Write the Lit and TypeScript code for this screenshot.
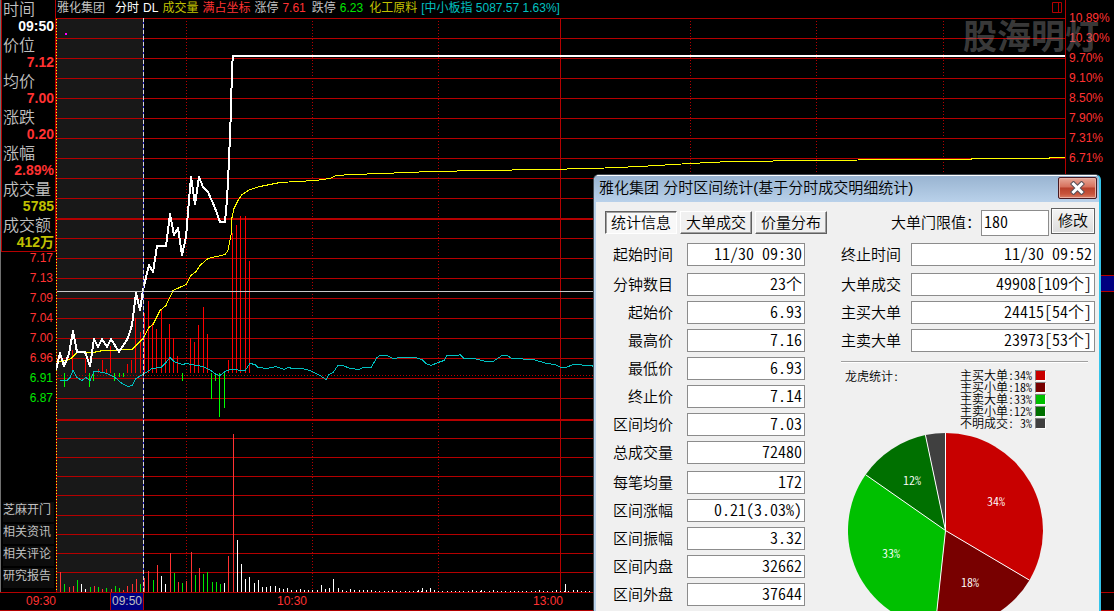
import { LitElement, html, svg, css } from "lit";
import { customElement, property } from "lit/decorators.js";

type Point = [number, number];
type Row = [string, string];

const points = (list: Point[]) => list.map((p) => p.join(",")).join(" ");

const PRICE: Point[] = [
  [56, 370], [60, 353], [64, 366], [69, 354], [73, 331], [77, 352], [85, 352], [90, 366], [94, 339],
  [98, 347], [102, 339], [107, 347], [111, 339], [119, 352], [128, 338], [132, 325], [136, 293],
  [140, 310], [143, 290], [149, 265], [153, 272], [157, 246], [166, 246], [170, 214], [174, 235],
  [178, 228], [182, 255], [186, 237], [189, 200], [191, 177], [195, 204], [199, 177], [203, 187],
  [208, 192], [215, 208], [220, 222], [225, 222], [227, 200], [229, 160], [231, 110], [232, 67],
  [233, 56], [1065, 56],
];

const AVERAGE: Point[] = [
  [57, 361], [67, 360], [71, 358], [77, 352], [93, 352], [103, 350], [132, 349], [143, 338],
  [149, 327], [153, 324], [160, 310], [166, 305], [173, 290], [186, 284], [191, 275], [196, 271],
  [200, 265], [208, 258], [225, 254], [228, 250], [231, 235], [232, 217], [234, 208], [238, 200],
  [242, 194], [250, 189], [260, 186], [280, 182], [315, 180], [330, 178], [336, 175], [353, 174],
  [382, 173], [432, 171], [483, 170], [542, 169], [593, 168], [640, 166], [690, 163], [730, 161],
  [816, 160], [900, 159], [971, 159], [972, 158], [1049, 158], [1050, 157], [1065, 157],
];

const INDEX: Point[] = [
  [60, 380], [67, 380], [70, 377], [73, 370], [77, 377], [82, 380], [86, 377], [90, 380], [94, 371],
  [98, 371], [107, 373], [115, 377], [122, 383], [128, 386], [132, 385], [136, 378], [143, 374],
  [152, 368], [161, 367], [166, 362], [170, 357], [174, 361], [182, 364], [187, 363], [196, 365],
  [203, 366], [211, 370], [216, 374], [220, 375], [225, 371], [230, 369], [245, 370], [250, 363],
  [255, 364], [258, 367], [267, 368], [276, 366], [284, 369], [288, 367], [293, 368], [300, 368],
  [307, 369], [312, 371], [320, 375], [326, 379], [329, 374], [333, 372], [338, 365], [343, 365],
  [350, 368], [359, 369], [363, 367], [371, 367], [377, 357], [380, 355], [387, 355], [393, 358],
  [402, 357], [415, 357], [422, 359], [426, 363], [431, 365], [438, 362], [444, 360], [447, 355],
  [458, 355], [460, 354], [464, 358], [474, 358], [486, 361], [493, 361], [502, 355], [507, 355],
  [512, 358], [533, 359], [547, 363], [555, 364], [561, 367], [566, 367], [573, 364], [590, 365],
  [600, 367], [1065, 370],
];

const RISE: Point[] = [
  [72, 350], [85, 359], [98, 369], [102, 360], [106, 369], [110, 346], [127, 364], [131, 360],
  [135, 318], [140, 332], [144, 313], [148, 301], [152, 323], [156, 329], [161, 310], [165, 338],
  [169, 324], [173, 338], [177, 356], [190, 338], [194, 342], [198, 325], [203, 307], [207, 334],
  [228, 360], [232, 233], [236, 225], [240, 216], [245, 216], [249, 261],
];

const FALL: Point[] = [
  [64, 387], [89, 387], [93, 381], [114, 381], [119, 377], [123, 377], [182, 381], [211, 399],
  [215, 381], [219, 417], [224, 408],
];

const VOLUME: Record<string, Point[]> = {
  "#ff3232": [
    [60, 572], [69, 587], [73, 586], [94, 586], [102, 589], [111, 589], [123, 590], [127, 586],
    [132, 584], [136, 579], [144, 578], [148, 571], [157, 565], [170, 553], [178, 582], [186, 581],
    [191, 552], [199, 568], [228, 556], [233, 434],
  ],
  "#00e600": [
    [64, 584], [77, 580], [90, 587], [98, 587], [106, 588], [115, 586], [119, 588], [140, 584],
    [153, 580], [174, 573], [182, 583], [195, 575], [203, 574], [207, 572], [212, 582], [216, 582],
    [220, 584],
  ],
  "#ffffff": [
    [81, 584], [85, 589], [161, 576], [165, 584], [224, 583], [237, 540], [241, 564], [245, 579],
    [249, 577], [254, 583], [258, 580], [262, 587], [266, 587], [270, 586], [275, 586], [279, 588],
    [283, 589], [287, 588], [291, 590], [296, 590], [300, 589], [304, 590], [308, 590], [312, 590],
    [317, 590], [321, 585], [325, 589], [329, 588], [333, 579], [338, 588], [342, 590], [346, 591],
    [350, 589], [354, 590], [359, 590], [363, 590], [367, 590], [371, 590], [392, 590], [418, 590],
    [422, 588], [426, 590], [430, 588], [434, 590], [472, 590], [481, 590], [493, 590], [539, 590],
    [556, 590], [565, 584], [573, 590], [577, 590],
  ],
};

for (let i = 76; i < 128; i++) VOLUME["#ffffff"].push([Math.round(56 + i * 4.2), 591]);

const GRID_Y = [
  38, 58, 78, 98, 118, 138, 158, 178, 198, 238, 258, 278, 298, 318, 338, 358, 378, 398, 438, 457,
  476, 495, 515, 534, 553, 572,
];

@customElement("minute-chart")
class MinuteChart extends LitElement {
  static styles = css`
    :host { display: block; min-height: 0; }
    svg { display: block; width: 100%; height: 100%; }
  `;

  render() {
    return html`<svg viewBox="56 18 1009 574" preserveAspectRatio="none" aria-label="分时走势">
      <rect x="57" y="19" width="86" height="573" fill="#181818" />
      <g fill="#b40000">
        <rect x="56" y="18" width="1009" height="1" />
        ${GRID_Y.map((y) => svg`<rect x="56" y=${y} width="1009" height="1" />`)}
        <rect x="56" y="218" width="1009" height="2" />
        <rect x="56" y="419" width="1009" height="2" />
        <rect x="560" y="18" width="1" height="574" />
        <rect x="56" y="18" width="1" height="574" />
      </g>
      <g stroke="#b40000" stroke-dasharray="1 2" shape-rendering="crispEdges">
        ${[186, 312, 438, 690, 816, 943].map(
          (x) => svg`<line x1=${x + 0.5} x2=${x + 0.5} y1="21" y2="592" />`
        )}
        <line x1="58" x2="1065" y1="375.5" y2="375.5" />
      </g>
      <line x1="56.5" x2="56.5" y1="19" y2="592" stroke="#ffff00" stroke-dasharray="1 2"
        shape-rendering="crispEdges" />
      <g fill="#ff0000">
        ${RISE.map(([x, y]) => svg`<rect x=${x} y=${y} width="1" height=${373 - y} />`)}
      </g>
      <g fill="#00ff00">
        ${FALL.map(([x, y]) => svg`<rect x=${x} y="373" width="1" height=${y - 373} />`)}
      </g>
      ${Object.entries(VOLUME).map(
        ([color, bars]) => svg`<g fill=${color}>
          ${bars.map(([x, y]) => svg`<rect x=${x} y=${y} width="1" height=${592 - y} />`)}
        </g>`
      )}
      <g fill="none" shape-rendering="crispEdges" stroke-linejoin="round">
        <polyline points=${points(INDEX)} stroke="#00c0c0" transform="translate(0 .5)" />
        <polyline points=${points(AVERAGE)} stroke="#ffff00" transform="translate(0 .5)" />
        <polyline points=${points(PRICE)} stroke="#ffffff" stroke-width="2" />
      </g>
      <rect x="57" y="291" width="1008" height="1" fill="#c8c8c8" />
      <rect x="143" y="18" width="1" height="574" fill="#2020c0" />
      <line x1="143.5" x2="143.5" y1="18" y2="592" stroke="#d8d8d8" stroke-dasharray="4 2"
        shape-rendering="crispEdges" />
      <rect x="65" y="33" width="2" height="2" fill="#ff00ff" />
    </svg>`;
  }
}

const SLICES = [
  { name: "主买大单", share: "34%", color: "#c80000", end: 0.335, x: 148, y: 69 },
  { name: "主买小单", share: "18%", color: "#780000", end: 0.517, x: 122, y: 150 },
  { name: "主卖大单", share: "33%", color: "#00c000", end: 0.847, x: 43, y: 121 },
  { name: "主卖小单", share: "12%", color: "#007000", end: 0.967, x: 64, y: 48 },
  { name: "不明成交", share: " 3%", color: "#404040", end: 1, x: 0, y: 0 },
];

const FIRST_GROUPS: Row[][] = [
  [["起始时间", "11/30 09:30"]],
  [
    ["分钟数目", "23个"],
    ["起始价", "6.93"],
    ["最高价", "7.16"],
    ["最低价", "6.93"],
    ["终止价", "7.14"],
    ["区间均价", "7.03"],
    ["总成交量", "72480"],
  ],
  [
    ["每笔均量", "172"],
    ["区间涨幅", "0.21(3.03%)"],
    ["区间振幅", "3.32"],
    ["区间内盘", "32662"],
    ["区间外盘", "37644"],
  ],
];

const SECOND_GROUPS: Row[][] = [
  [["终止时间", "11/30 09:52"]],
  [
    ["大单成交", "49908[109个]"],
    ["主买大单", "24415[54个]"],
    ["主卖大单", "23973[53个]"],
  ],
];

@customElement("field-list")
class FieldList extends LitElement {
  @property({ attribute: false }) groups: Row[][] = [];

  static styles = css`
    :host { display: flex; flex-direction: column; gap: 7px; }
    .group { display: flex; flex-direction: column; gap: 5px; }
    .row { display: flex; align-items: center; justify-content: space-between; height: 23px; }
    label { flex: 1; padding-bottom: 2px; font-size: 15px; line-height: 20px; white-space: nowrap; text-align: var(--label-align, left); }
    input {
      box-sizing: border-box; width: var(--field-width, 118px); height: 23px; margin: 0 0 0 var(--label-gap, 14px);
      padding: 0 2px 3px; border: 1px solid #8c8c8c; border-radius: 0; background: #fff; color: #000;
      font: 350 16px/18px "Noto Sans CJK SC", sans-serif; font-feature-settings: "hwid"; text-align: right;
    }
  `;

  render() {
    return this.groups.map(
      (group, g) => html`<div class="group">
        ${group.map(
          ([name, value], i) => html`<div class="row">
            <label for=${`f${g}-${i}`}>${name}</label>
            <input id=${`f${g}-${i}`} readonly .value=${value} />
          </div>`
        )}
      </div>`
    );
  }
}

@customElement("stats-dialog")
class StatsDialog extends LitElement {
  static styles = css`
    :host {
      display: block; box-sizing: border-box; color: #000;
      border: 1px solid #404850; border-bottom: 0; border-right: 2px solid #35c4ea;
      border-radius: 6px 6px 0 0; overflow: hidden; background: #f0f0f0;
      font: 350 15px/20px "Noto Sans CJK SC", sans-serif;
    }
    header {
      display: flex; align-items: flex-start; justify-content: space-between; height: 27px;
      box-sizing: border-box; padding: 1px 2px 0 5px; border-top: 1px solid #fff;
      background: linear-gradient(#99b4d1, #b9d1ea);
    }
    h1 { margin: 0; font: 350 15px/22px "Liberation Sans", "Noto Sans CJK SC", sans-serif; white-space: nowrap; }
    .close {
      display: flex; align-items: center; justify-content: center; box-sizing: border-box;
      width: 39px; height: 22px; padding: 0; border: 1px solid #471a22; border-radius: 2px;
      background: linear-gradient(#e8a898, #d6705c 45%, #b8402c 50%, #c8543c 80%, #d88068);
      box-shadow: inset 0 0 0 1px #e8b0a4;
    }
    .close svg { flex: none; }
    .body { border-left: 2px solid #b9d1ea; padding: 6px 4px 0 9px; }
    .top { display: flex; align-items: center; height: 28px; }
    .tabs { display: flex; gap: 3px; }
    .tab {
      width: 72px; height: 23px; padding: 0; white-space: nowrap; box-sizing: border-box;
      border: 1px solid; border-color: #fff #606060 #606060 #fff; box-shadow: inset -1px -1px #a0a0a0;
      background: #f0f0f0; color: #000; font: inherit; line-height: 20px;
    }
    .on { border-color: #606060 #fff #fff #606060; box-shadow: inset 1px 1px #a0a0a0; background: #f8f8f8; }
    .limit { display: flex; margin-left: auto; align-items: center; height: 28px; }
    .limit input {
      align-self: flex-end; box-sizing: border-box; width: 68px; height: 26px; margin: 0 2px 0 0; padding: 0 2px 5px;
      border: 1px solid #8c8c8c; background: #fff; color: #000; font: inherit; font-size: 16px; font-feature-settings: "hwid";
    }
    .limit button {
      align-self: flex-start; box-sizing: border-box; width: 44px; height: 26px; padding: 0 0 2px;
      border: 1px solid #606060; background: linear-gradient(#f4f4f4, #dcdcdc); color: #000; font: inherit;
      box-shadow: inset 0 0 0 1px #fcfcfc;
    }
    .columns { display: flex; justify-content: space-between; align-items: flex-start; margin-top: 7px; }
    .first { width: 200px; --label-align: right; }
    .second { width: 254px; --field-width: 184px; --label-gap: 10px; }
    hr { width: 247px; height: 1px; margin: 9px 0 6px; border: 0; border-top: 1px solid #a0a0a0; background: #fff; }
    .dragon { display: flex; justify-content: space-between; padding: 0 49px 0 4px; font-size: 12px; line-height: 14px; font-feature-settings: "hwid"; }
    ul { margin: 0; padding: 0; list-style: none; }
    li { display: flex; align-items: center; gap: 3px; height: 12px; line-height: 12px; white-space: pre; }
    .swatch { box-sizing: border-box; width: 11px; height: 11px; border: 1px solid; border-color: #808080 #fff #fff #808080; }
    .pie { display: block; width: 195px; height: 195px; margin: 4px 0 0 7px; }
    .pie text { font-size: 12px; font-feature-settings: "hwid"; fill: #fff; text-anchor: middle; }
  `;

  private slice(from: number, to: number, color: string) {
    const at = (t: number) => {
      const a = t * Math.PI * 2;
      return `${97.5 + 97.5 * Math.sin(a)} ${97.5 - 97.5 * Math.cos(a)}`;
    };
    return svg`<path d=${`M97.5 97.5L${at(from)}A97.5 97.5 0 0 1 ${at(to)}Z`} fill=${color} />
      <path d=${`M97.5 97.5L${at(from)}`} stroke="#fff" />`;
  }

  render() {
    return html`
      <header>
        <h1>雅化集团 分时区间统计(基于分时成交明细统计)</h1>
        <button class="close" aria-label="关闭">
          <svg width="15" height="14" viewBox="0 0 15 14" fill="none">
            <path d="M3.5 3l8 8M11.5 3l-8 8" stroke="#5a5058" stroke-width="5" stroke-linecap="square" />
            <path d="M3.5 3l8 8M11.5 3l-8 8" stroke="#fff" stroke-width="3" stroke-linecap="square" />
          </svg>
        </button>
      </header>
      <div class="body">
        <div class="top">
          <div class="tabs">
            <button class="tab on">统计信息</button>
            <button class="tab">大单成交</button>
            <button class="tab">价量分布</button>
          </div>
          <div class="limit">
            <label for="limit">大单门限值：</label>
            <input id="limit" value="180" />
            <button>修改</button>
          </div>
        </div>
        <div class="columns">
          <field-list class="first" .groups=${FIRST_GROUPS}></field-list>
          <div>
            <field-list class="second" .groups=${SECOND_GROUPS}></field-list>
            <hr />
            <div class="dragon">
              <span>龙虎统计:</span>
              <ul>
                ${SLICES.map(
                  (s) => html`<li><span>${s.name}:${s.share}</span><span class="swatch" style="background:${s.color}"></span></li>`
                )}
              </ul>
            </div>
            <svg class="pie" viewBox="0 0 195 195">
              ${SLICES.map((s, i) => this.slice(i ? SLICES[i - 1].end : 0, s.end, s.color))}
              <path d="M97.5 97.5V0" stroke="#fff" />
              ${SLICES.filter((s) => s.x).map(
                (s) => svg`<text x=${s.x} y=${s.y + 4}>${s.share}</text>`
              )}
            </svg>
          </div>
        </div>
      </div>
    `;
  }
}

const READOUT: [string, string, string][] = [
  ["时间", "09:50", "white"],
  ["价位", "7.12", "red"],
  ["均价", "7.00", "red"],
  ["涨跌", "0.20", "red"],
  ["涨幅", "2.89%", "red"],
  ["成交量", "5785", "yellow"],
  ["成交额", "412万", "yellow"],
];

@customElement("app-root")
class AppRoot extends LitElement {
  static styles = css`
    :host {
      position: relative; display: grid; box-sizing: border-box; height: 100vh; overflow: hidden;
      grid-template-columns: 56px minmax(0, 1fr) 49px; grid-template-rows: 18px minmax(0, 1fr) 19px;
      background: #000; color: #c0c0c0;
      font: 12px/16px "Liberation Sans", "Noto Sans CJK SC", sans-serif;
    }
    .side { grid-row: 1 / 3; display: flex; flex-direction: column; border-left: 1px solid #707070; }
    dl { box-sizing: border-box; height: 252px; margin: 0; border: 1px solid #b40000; border-top: 0; }
    dt { height: 18px; padding-left: 1px; font: 350 16px/16px "Noto Sans CJK SC", sans-serif; }
    dd { height: 18px; margin: 0; padding-right: 1px; font-size: 14px; line-height: 17px; font-weight: 700; text-align: right; }
    .white { color: #fff; }
    .red { color: #ff3232; }
    .yellow { color: #c0c000; }
    .green { color: #00e600; }
    .cyan { color: #00c0c0; }
    .scale { margin: -4px 0 0; padding: 0 3px 0 0; list-style: none; text-align: right; line-height: 20px; }
    nav { display: flex; flex-direction: column; gap: 2px; margin-top: auto; padding: 0 2px 4px; }
    nav a { height: 20px; background: #0c0c0c; color: #c0c0c0; line-height: 17px; text-decoration: none; white-space: nowrap; }
    .head { display: flex; gap: 4px; padding: 0 3px 0 1px; line-height: 17px; white-space: nowrap; }
    .stock { margin-right: 6px; }
    .bound { margin-right: 2px; }
    .head svg { margin: 2px 0 0 auto; }
    .percent { grid-column: 3; grid-row: 1 / 3; box-sizing: border-box; padding-top: 8px; border-left: 1px solid #b40000; }
    .percent ul { margin: 0; padding: 0 0 0 3px; list-style: none; line-height: 20px; }
    .cursor { height: 15px; margin-top: 107px; border: 1px solid #b40000; border-right: 0; background: #000080; }
    .times {
      grid-column: 1 / 4; display: grid; grid-template-columns: 56px 54px 34px 133fr 256fr 532fr 49px;
      border: solid #b40000; border-width: 1px 0; line-height: 17px;
    }
    .times span:first-child { text-align: right; }
    .now { border: solid #b40000; border-width: 0 1px; background: #000080; color: #c0c0c0; text-align: center; }
    .t1 { grid-column: 5; }
    .t2 { grid-column: 6; }
    .mark { position: absolute; top: 12px; right: 15px; color: rgba(150, 150, 150, 0.4); font: 700 34px/46px "Noto Sans CJK SC", sans-serif; }
    stats-dialog { position: absolute; top: 174px; right: 13px; width: 508px; }
  `;

  render() {
    return html`
      <div class="side">
        <dl>
          ${READOUT.map(([name, value, tone]) => html`<dt>${name}</dt><dd class=${tone}>${value}</dd>`)}
        </dl>
        <ul class="scale">
          ${["7.17", "7.13", "7.09", "7.04", "7.00", "6.96"].map((v) => html`<li class="red">${v}</li>`)}
          ${["6.91", "6.87"].map((v) => html`<li class="green">${v}</li>`)}
        </ul>
        <nav>
          ${["芝麻开门", "相关资讯", "相关评论", "研究报告"].map((t) => html`<a href="#">${t}</a>`)}
        </nav>
      </div>
      <div class="head">
        <span class="stock">雅化集团</span>
        <span class="white">分时</span>
        <span class="white">DL</span>
        <span class="yellow">成交量</span>
        <span class="red">满占坐标</span>
        <span>涨停</span>
        <span class="red bound">7.61</span>
        <span>跌停</span>
        <span class="green bound">6.23</span>
        <span class="yellow">化工原料</span>
        <span class="cyan">[中小板指 5087.57 1.63%]</span>
        <svg width="10" height="11" viewBox="0 0 10 11" fill="none" stroke="#b40000">
          <path d="M.5.5h9v10h-9zM6.5.5v10" />
        </svg>
      </div>
      <minute-chart></minute-chart>
      <div class="percent red">
        <ul>
          ${["10.89%", "10.30%", "9.70%", "9.10%", "8.50%", "7.90%", "7.31%", "6.71%"].map(
            (v) => html`<li>${v}</li>`
          )}
        </ul>
        <div class="cursor"></div>
      </div>
      <div class="times red">
        <span>09:30</span>
        <span></span>
        <span class="now">09:50</span>
        <span class="t1">10:30</span>
        <span class="t2">13:00</span>
      </div>
      <div class="mark">股海明灯</div>
      <stats-dialog></stats-dialog>
    `;
  }
}
